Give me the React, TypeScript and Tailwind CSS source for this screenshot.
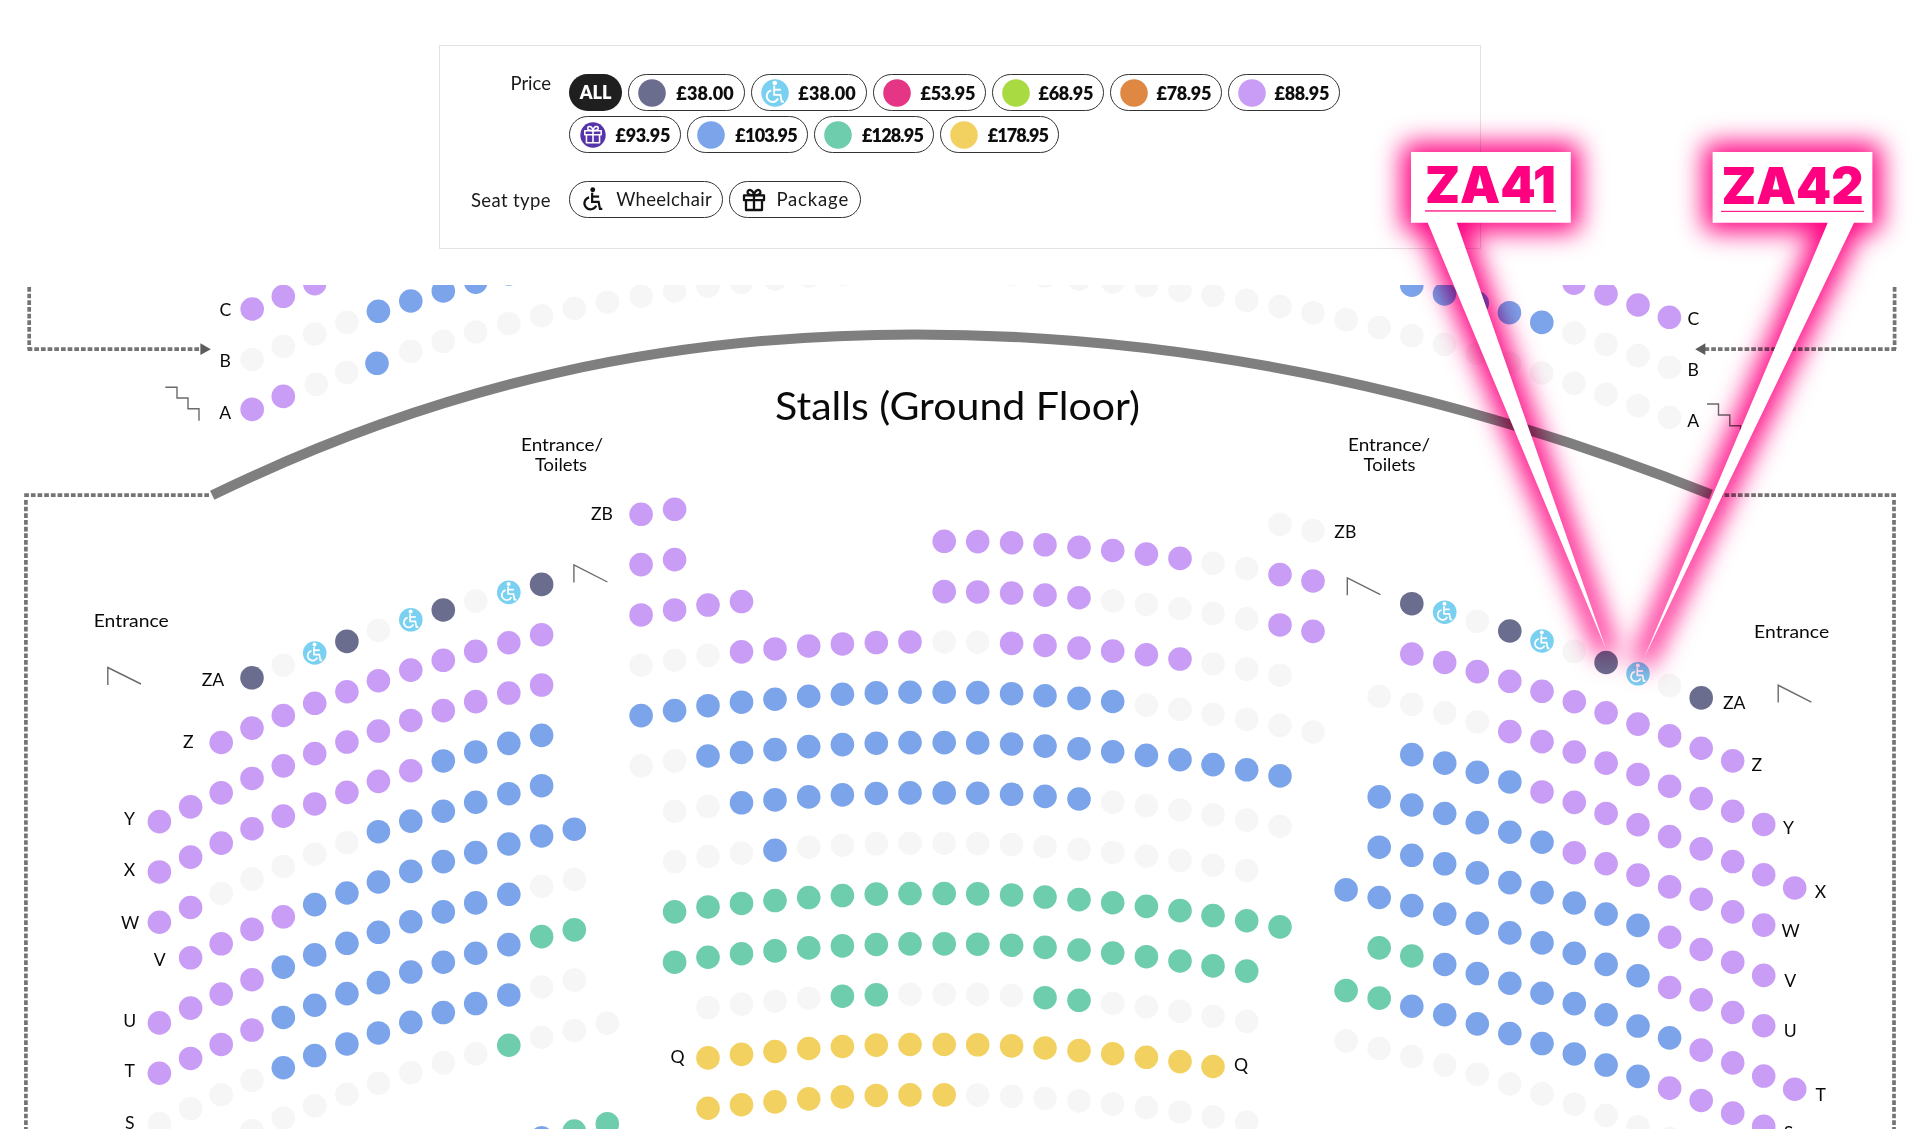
import React from "react";

const FONT = "Lato, 'Open Sans', sans-serif";
const PITCH = 50.32;
const SEAT_R = 11.8;

const COLORS: Record<string, string> = {
  p: "#c99df6",
  b: "#7ba4ea",
  G: "#6dcdac",
  y: "#f2d160",
  N: "#6b6d8f",
  W: "#7ad0f0",
  "-": "#f6f6f6",
};

type Block = { cols: [number, number][]; rows: string[] };

// Each column is [x, y of its first row]; each row string holds one seat code per column.
const LEFT: Block = {
  cols: [
    [159.4, 721], [190.6, 706.2], [221.2, 692.2], [252, 677.8], [283.3, 665.2], [314.7, 653],
    [346.9, 641.4], [378.4, 630.4], [410.8, 619.8], [443.3, 610], [475.7, 601], [508.8, 592.4],
    [541.6, 584.4], [574.3, 577.6], [607.3, 570.4],
  ],
  rows: [
    "...N-WN-WN-WN..",
    "..ppppppppppp..",
    "ppppppppppppp..",
    "pppppppppbbbb..",
    "pp-----bbbbbb..",
    ".ppppbbbbbbbbb.",
    "ppppbbbbbbbb--.",
    "ppppbbbbbbbbGG.",
    "----bbbbbbbb--.",
    "...--------G---",
    "...............",
    "............bGG",
  ],
};

const CENTER: Block = {
  cols: [
    [641.1, 514.3], [674.6, 509.3], [708, 504.4], [741.5, 500.9], [775, 498], [808.7, 495],
    [842.4, 493], [876.3, 491.6], [910, 491], [944.2, 491], [977.7, 491.3], [1011.6, 492.4],
    [1045, 494.5], [1079, 497.1], [1112.7, 500.2], [1146.4, 503.8], [1180, 508.1], [1213, 513],
    [1246.7, 518.2], [1280, 524.3], [1313, 530.7],
  ],
  rows: [
    "pp.................--",
    "pp.......pppppppp--pp",
    "pppp.....ppppp-----pp",
    "---pppppp--pppppp---.",
    "bbbbbbbbbbbbbbb------",
    "--bbbbbbbbbbbbbbbbbb.",
    ".--bbbbbbbbbbb------.",
    ".---b--------------..",
    ".GGGGGGGGGGGGGGGGGGG.",
    ".GGGGGGGGGGGGGGGGGG..",
    "..----GG----GG-----..",
    "..yyyyyyyyyyyyyyyy...",
    "..yyyyyyyy---------..",
  ],
};

const RIGHT: Block = {
  cols: [
    [1346.1, 588], [1379.2, 595.6], [1411.8, 603.7], [1444.7, 612.2], [1477.3, 621.3],
    [1509.8, 631], [1542, 641], [1574.3, 651.4], [1606.1, 662.5], [1638, 673.8],
    [1669.6, 685.6], [1701.2, 697.9], [1732.7, 710.6], [1763.7, 723.8], [1794.7, 737],
  ],
  rows: [
    "..NW-NW-NW-N...",
    "..ppppppppppp..",
    ".----ppppppppp.",
    "..bbbbppppppppp",
    ".bbbbbbppppppp.",
    ".bbbbbbbbbpppp.",
    "bbbbbbbbbbpppp.",
    ".GGbbbbbbbbpppp",
    "GGbbbbbbbbpppp.",
    "-----------....",
  ],
};

// Circle seats above the stalls, cut off by the top edge of the map.
const CIRCLE: [number, number, string][] = [
  [252.2, 309, "p"], [283.3, 296.3, "p"], [314.7, 283.6, "p"],
  [378.4, 311.3, "b"], [410.8, 301, "b"], [443.3, 291, "b"], [475.7, 282.2, "b"], [508.8, 274, "b"],
  [252.2, 359.5, "-"], [283.3, 346.3, "-"], [314.7, 334, "-"], [346.9, 322.3, "-"],
  [252.2, 409.4, "p"], [283.3, 396.4, "p"], [316.3, 384.3, "-"], [346.9, 372.4, "-"],
  [377, 363.3, "b"], [410.8, 351.3, "-"], [443.3, 341.3, "-"], [475.7, 332, "-"],
  [508.8, 323.7, "-"], [541.6, 315.7, "-"], [574.3, 308.5, "-"], [607.5, 302.2, "-"],
  [641.1, 296.2, "-"], [674.6, 291, "-"], [708, 286.2, "-"], [741.5, 282.5, "-"],
  [775, 279, "-"], [808.7, 276.2, "-"], [842.4, 274.4, "-"],
  [1011.6, 274.4, "-"], [1045, 276.2, "-"], [1079, 279, "-"], [1112.7, 282, "-"],
  [1146.4, 285.6, "-"], [1180, 290.4, "-"], [1213, 295.3, "-"], [1246.7, 300.4, "-"],
  [1280, 306.4, "-"], [1313, 312.7, "-"], [1346.1, 319.7, "-"], [1379.2, 327.5, "-"],
  [1411.8, 335.7, "-"], [1444.5, 344.4, "-"], [1477.3, 353.5, "-"], [1509.6, 363, "-"],
  [1541.8, 373, "-"], [1574, 383.4, "-"], [1606, 394.4, "-"], [1638, 405.7, "-"], [1669.4, 417.3, "-"],
  [1574, 333, "-"], [1606, 344.3, "-"], [1638, 355.6, "-"], [1669.4, 367.3, "-"],
  [1411.8, 285.2, "b"], [1444.5, 294, "b"], [1477.3, 303, "b"], [1509.4, 312.7, "b"], [1541.8, 322.4, "b"],
  [1574, 283.2, "p"], [1606, 294, "p"], [1638, 305, "p"], [1669.4, 317.3, "p"],
];

const ROW_LABELS: [number, number, string][] = [
  [225.3, 316.3, "C"], [225.3, 366.7, "B"], [225.3, 418.5, "A"],
  [602, 520.3, "ZB"], [213, 686, "ZA"], [188.4, 748.3, "Z"], [129.4, 825.3, "Y"],
  [129.4, 875.7, "X"], [130, 929, "W"], [159.7, 965.7, "V"], [129.8, 1027.3, "U"],
  [129.8, 1076.7, "T"], [129.8, 1128.5, "S"], [677.5, 1063, "Q"], [1241, 1071.3, "Q"],
  [1693.3, 324.7, "C"], [1693.3, 375.7, "B"], [1693.3, 427.3, "A"], [1345.3, 538, "ZB"],
  [1734.3, 708.7, "ZA"], [1756.7, 770.7, "Z"], [1788.6, 834, "Y"], [1820.4, 897.7, "X"],
  [1790.6, 937, "W"], [1790.2, 987, "V"], [1790.2, 1037.3, "U"], [1820.6, 1100.7, "T"],
  [1788.6, 1138.5, "S"],
];

function WheelchairGlyph({ color, width }: { color: string; width: number }) {
  return (
    <g fill="none" stroke={color} strokeWidth={width}>
      <circle cx={-0.2} cy={-8.4} r={2} fill={color} stroke="none" />
      <path d="M-0.7 -6V1.6H4.6L5.7 7.3H7.6" />
      <path d="M-0.7 -2.8H5" />
      <path d="M-3.2 -2.2A5 5 0 1 0 2.6 4.6" />
    </g>
  );
}

function GiftGlyph({ color, width }: { color: string; width: number }) {
  return (
    <g fill="none" stroke={color} strokeWidth={width} strokeLinejoin="round">
      <path d="M-10 -4.6H10V0.2H-10Z M-8 0.2V10H8V0.2 M0 -4.6V10" />
      <path d="M0 -4.8C-2 -4.8 -6.6 -4.9 -6.4 -7.8C-6.2 -11 -1.2 -11.2 0 -4.8C1.2 -11.2 6.2 -11 6.4 -7.8C6.6 -4.9 2 -4.8 0 -4.8" />
    </g>
  );
}

function Seat({ x, y, code }: { x: number; y: number; code: string }) {
  return (
    <g transform={`translate(${x} ${y})`}>
      <circle r={SEAT_R} fill={COLORS[code]} />
      {code === "W" && <WheelchairGlyph color="#fff" width={1.7} />}
    </g>
  );
}

function SeatBlock({ block }: { block: Block }) {
  return (
    <>
      {block.rows.map((row, r) =>
        row.split("").map((code, c) =>
          code === "." ? null : (
            <Seat key={`${r}-${c}`} x={block.cols[c][0]} y={block.cols[c][1] + r * PITCH} code={code} />
          ),
        ),
      )}
    </>
  );
}

function Place({ x, y, w, size, children }: { x: number; y: number; w: number; size: number; children: string }) {
  return (
    <text x={x - w / 2} y={y} fontSize={size} textLength={w} lengthAdjust="spacingAndGlyphs">
      {children}
    </text>
  );
}

function SeatMap() {
  return (
    <svg className="absolute inset-0" width={1920} height={1129} viewBox="0 0 1920 1129" fontFamily={FONT}>
      <defs>
        <clipPath id="map">
          <rect x={0} y={285} width={1920} height={844} />
        </clipPath>
      </defs>
      <g clipPath="url(#map)">
        {CIRCLE.map(([x, y, code], i) => (
          <Seat key={i} x={x} y={y} code={code} />
        ))}
        <SeatBlock block={LEFT} />
        <SeatBlock block={CENTER} />
        <SeatBlock block={RIGHT} />
      </g>

      <path
        d="M212.2 495.3C445 382 670 334.4 915 334.4C1180 334.4 1445 388.5 1711 494.5"
        fill="none"
        stroke="#7f7f7f"
        strokeWidth={10}
      />
      <g fill="none" stroke="#747474" strokeWidth={3.7} strokeDasharray="4.7 1.97">
        <path d="M29.2 287V349.2" />
        <path d="M27.6 349.2H201" />
        <path d="M24.2 495.2H210" />
        <path d="M25.9 500V1129" />
        <path d="M1894.6 287V349.2" />
        <path d="M1896 349.2H1704" />
        <path d="M1896 495.2H1714" />
        <path d="M1894 500V1129" />
      </g>
      <g fill="#5c5c5c">
        <path d="M200.4 343.2L210.8 349.2L200.4 355Z" />
        <path d="M1705.4 343.2L1695.2 349.2L1705.4 355Z" />
      </g>
      <g fill="none" stroke="#6b6b6b" strokeWidth={1.4}>
        <path d="M165.3 387.3H177V398H188V408.8H199V420.7" />
        <path d="M1707 404H1718.5V415H1729.8V425.7H1740.5V437" />
        <path d="M107.8 685V667.5L141 684" />
        <path d="M573.9 582.5V565L607.4 582" />
        <path d="M1347.3 595.2V578L1380.4 594.7" />
        <path d="M1778.2 702.6V685.2L1811.4 702.2" />
      </g>

      <g fill="#0a0a0a">
        <Place x={957.6} y={419.6} w={365} size={39}>Stalls (Ground Floor)</Place>
        <Place x={562} y={450.6} w={82} size={18}>Entrance/</Place>
        <Place x={561} y={470.6} w={52} size={18}>Toilets</Place>
        <Place x={1389} y={450.6} w={82} size={18}>Entrance/</Place>
        <Place x={1389.6} y={470.6} w={52} size={18}>Toilets</Place>
        <Place x={131.2} y={627} w={75} size={18}>Entrance</Place>
        <Place x={1791.6} y={638.2} w={75} size={18}>Entrance</Place>
        {ROW_LABELS.map(([x, y, label], i) => (
          <text key={i} x={x} y={y} fontSize={17.6} textAnchor="middle">
            {label}
          </text>
        ))}
      </g>
    </svg>
  );
}

type PillProps = { width: string; price: string; color: string; icon?: string; tracking?: string };

function PricePill({ width, price, color, icon, tracking = "tracking-normal" }: PillProps) {
  return (
    <div className={`flex h-[37px] items-center justify-between rounded-full border border-[#333] bg-white pl-[9px] pr-[10px] ${width}`}>
      <svg className="shrink-0" width={28} height={28} viewBox="-14 -14 28 28">
        <circle r={icon === "gift" ? 12.7 : 13.8} fill={color} />
        {icon === "wheelchair" && (
          <g transform="scale(1.18)">
            <WheelchairGlyph color="#fff" width={1.6} />
          </g>
        )}
        {icon === "gift" && (
          <g transform="translate(0 -0.4) scale(0.82)">
            <GiftGlyph color="#fff" width={1.9} />
          </g>
        )}
      </svg>
      <span className={`text-[18px] font-extrabold leading-none text-[#0d0d0d] ${tracking}`}>{price}</span>
    </div>
  );
}

function Legend() {
  return (
    <section className="ml-[439px] mt-[45px] flex h-[204px] w-[1042px] flex-col border border-[#e3e3e3] bg-white pt-[28px]">
      <div className="flex">
        <div className="w-[111px] text-right text-[18.5px] leading-[19px] text-[#1a1a1a]">Price</div>
        <div className="ml-[18px] flex flex-col gap-[5px]">
          <div className="flex gap-[6px]">
            <div className="flex h-[37px] w-[53px] items-center justify-center rounded-full bg-[#1f1f1f] text-[18px] font-extrabold text-white">
              ALL
            </div>
            <PricePill width="w-[117px]" price="£38.00" color="#6b6d8f" tracking="tracking-[0.2px]" />
            <PricePill width="w-[116px]" price="£38.00" color="#7ad0f0" icon="wheelchair" tracking="tracking-[0.2px]" />
            <PricePill width="w-[113px]" price="£53.95" color="#e53585" tracking="tracking-[-0.35px]" />
            <PricePill width="w-[112px]" price="£68.95" color="#a9da42" tracking="tracking-[-0.35px]" />
            <PricePill width="w-[112px]" price="£78.95" color="#df8843" tracking="tracking-[-0.35px]" />
            <PricePill width="w-[112px]" price="£88.95" color="#c99df6" tracking="tracking-[-0.35px]" />
          </div>
          <div className="flex gap-[6px]">
            <PricePill width="w-[112px]" price="£93.95" color="#5533ab" icon="gift" tracking="tracking-[-0.35px]" />
            <PricePill width="w-[121px]" price="£103.95" color="#7ba4ea" tracking="tracking-[-0.75px]" />
            <PricePill width="w-[120px]" price="£128.95" color="#6dcdac" tracking="tracking-[-0.85px]" />
            <PricePill width="w-[119px]" price="£178.95" color="#f2d160" tracking="tracking-[-0.95px]" />
          </div>
        </div>
      </div>
      <div className="mt-[28px] flex items-center">
        <div className="w-[111px] whitespace-nowrap text-right text-[18.5px] leading-[20px] tracking-[0.4px] text-[#1a1a1a]">Seat type</div>
        <div className="ml-[18px] flex gap-[6px] text-[18.5px] leading-none tracking-[0.3px] text-[#1a1a1a]">
          <div className="flex h-[37px] w-[154px] items-center justify-between rounded-full border border-[#333] pl-[9px] pr-[10px]">
            <svg className="shrink-0" width={28} height={28} viewBox="-14 -14 28 28">
              <g transform="scale(1.22)">
                <WheelchairGlyph color="#111" width={1.8} />
              </g>
            </svg>
            Wheelchair
          </div>
          <div className="flex h-[37px] w-[132px] items-center justify-between rounded-full border border-[#333] pl-[10px] pr-[11px]">
            <svg className="shrink-0" width={28} height={28} viewBox="-14 -14 28 28">
              <GiftGlyph color="#111" width={2.3} />
            </svg>
            <span className="tracking-[0.85px]">Package</span>
          </div>
        </div>
      </div>
    </section>
  );
}

const CALLOUT_1 = "M1411 152H1570.8V222.8H1456.7L1606 649L1427.7 222.8H1411Z";
const CALLOUT_2 = "M1712.6 152H1872.4V222.8H1854L1644 658L1827.7 222.8H1712.6Z";

function Callouts() {
  return (
    <>
      <svg className="absolute inset-0 mix-blend-multiply" width={1920} height={1129} viewBox="0 0 1920 1129">
        <defs>
          <filter id="glow" filterUnits="userSpaceOnUse" x={1340} y={80} width={580} height={660}>
            <feGaussianBlur stdDeviation={13} />
          </filter>
        </defs>
        <g fill="#ff0080" stroke="#ff0080" strokeWidth={18} strokeLinejoin="round">
          <path d={CALLOUT_1} filter="url(#glow)" />
          <path d={CALLOUT_2} filter="url(#glow)" />
        </g>
      </svg>
      <svg className="absolute inset-0" width={1920} height={1129} viewBox="0 0 1920 1129">
        <path d={CALLOUT_1} fill="#fff" />
        <path d={CALLOUT_2} fill="#fff" />
        <g fill="#ff0080" fontFamily="Inter, sans-serif" fontWeight={900} fontSize={50.5}>
          <text x={1425} y={203} textLength={131} lengthAdjust="spacingAndGlyphs">ZA41</text>
          <text x={1721.5} y={203.6} textLength={142} lengthAdjust="spacingAndGlyphs">ZA42</text>
        </g>
        <rect x={1425} y={210} width={131} height={1.8} fill="#ff4fa4" />
        <rect x={1721} y={210.8} width={143} height={1.2} fill="#ff1f8f" />
      </svg>
    </>
  );
}

export default function App() {
  return (
    <main className="relative isolate flex h-[1129px] w-[1920px] flex-col overflow-hidden bg-white font-[Lato,'Open_Sans',sans-serif]">
      <Legend />
      <SeatMap />
      <Callouts />
    </main>
  );
}
